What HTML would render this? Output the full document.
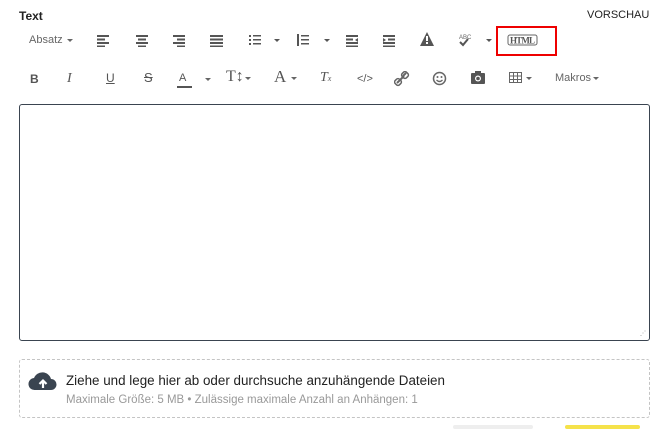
<!DOCTYPE html><html><head><meta charset="utf-8"><style>
body{margin:0;width:666px;height:428px;background:#fff;font-family:"Liberation Sans",sans-serif;position:relative;overflow:hidden;color:#333}
.a{position:absolute}
.ic{position:absolute;color:#555;font-size:13px;line-height:14px;text-align:center}
.car{position:absolute;width:0;height:0;border-left:3px solid transparent;border-right:3px solid transparent;border-top:3px solid #666}
</style></head><body>
<div class="a" style="left:19px;top:9px;font-size:12px;font-weight:bold;color:#222">Text</div>
<div class="a" style="left:587px;top:9px;font-size:11px;color:#222">VORSCHAU</div>
<div class="a" style="left:29px;top:34px;font-size:11px;color:#666">Absatz</div><div class="car" style="left:67px;top:39px"></div>
<svg class="a" style="left:0;top:0" width="666" height="100" fill="#555" stroke="none">
<g><rect x="97" y="35" width="12" height="2"/><rect x="97" y="38.5" width="8" height="2"/><rect x="97" y="42" width="12" height="2"/><rect x="97" y="45.5" width="8" height="1.5"/></g>
<g><rect x="136" y="35" width="12" height="2"/><rect x="138" y="38.5" width="8" height="2"/><rect x="136" y="42" width="12" height="2"/><rect x="138" y="45.5" width="8" height="1.5"/></g>
<g><rect x="173" y="35" width="12" height="2"/><rect x="177" y="38.5" width="8" height="2"/><rect x="173" y="42" width="12" height="2"/><rect x="177" y="45.5" width="8" height="1.5"/></g>
<g><rect x="210" y="35" width="13" height="2"/><rect x="210" y="38.5" width="13" height="2"/><rect x="210" y="42" width="13" height="2"/><rect x="210" y="45.5" width="13" height="1.5"/></g>
<g><rect x="249" y="35" width="2" height="2"/><rect x="253" y="35" width="8" height="1.5"/><rect x="249" y="39" width="2" height="2"/><rect x="253" y="39" width="8" height="1.5"/><rect x="249" y="43" width="2" height="2"/><rect x="253" y="43" width="8" height="1.5"/></g>
<polygon points="274,39 280,39 277,42"/>
<g><rect x="297" y="34" width="2" height="12"/><rect x="301" y="35" width="8" height="1.5"/><rect x="301" y="39" width="8" height="1.5"/><rect x="301" y="43" width="8" height="1.5"/></g>
<polygon points="324,39 330,39 327,42"/>
<g><rect x="346" y="35" width="12" height="2"/><rect x="346" y="38.5" width="7" height="2"/><rect x="346" y="42" width="12" height="2"/><rect x="346" y="45.5" width="12" height="1.5"/><polygon points="358,38 355,40 358,42"/></g>
<g><rect x="383" y="35" width="12" height="2"/><rect x="388" y="38.5" width="7" height="2"/><rect x="383" y="42" width="12" height="2"/><rect x="383" y="45.5" width="12" height="1.5"/><polygon points="383,38 386,40 383,42"/></g>
<polygon points="427,32 434,46 420,46"/><rect x="426" y="36" width="2" height="5" fill="#fff"/><rect x="426" y="42" width="2" height="2" fill="#fff"/>
<text x="459" y="39" font-size="6" fill="#666" font-family="Liberation Sans">ABC</text><path d="M460 42l3 3 5-6" stroke="#555" stroke-width="2" fill="none"/>
<polygon points="486,39 492,39 489,42"/>
<rect x="497" y="27" width="59" height="28" fill="none" stroke="#e00" stroke-width="2"/>
<rect x="508" y="35" width="29" height="10" rx="2" fill="none" stroke="#666" stroke-width="1"/>
<text x="510" y="43.5" font-size="9" font-family="Liberation Serif" font-weight="bold" fill="#555" textLength="25">HTML</text>
</svg>
<div class="ic" style="left:30px;top:72px;font-weight:bold;font-size:12px">B</div>
<div class="ic" style="left:67px;top:72px;font-style:italic;font-family:'Liberation Serif';font-size:14px">I</div>
<div class="ic" style="left:106px;top:71px;text-decoration:underline;font-size:12px">U</div>
<div class="ic" style="left:144px;top:71px;text-decoration:line-through;font-size:13px">S</div>
<div class="ic" style="left:179px;top:71px;font-size:11px">A</div><div class="a" style="left:177px;top:86px;width:15px;height:2px;background:#555"></div><div class="car" style="left:205px;top:78px"></div>
<div class="ic" style="left:226px;top:70px;font-family:'Liberation Serif';font-size:16px">T↕</div><div class="car" style="left:245px;top:77px"></div>
<div class="ic" style="left:274px;top:70px;font-family:'Liberation Serif';font-size:17px">A</div><div class="car" style="left:291px;top:77px"></div>
<div class="ic" style="left:320px;top:71px;font-family:'Liberation Serif';font-style:italic;font-size:14px">T<span style="font-size:8px">x</span></div>
<div class="ic" style="left:357px;top:72px;font-size:11px">&lt;/&gt;</div>
<svg class="a" style="left:394px;top:71px" width="16" height="16"><path d="M3 12l3-3M9 5l3-3M5 10l5-5" stroke="#666" stroke-width="2" fill="none"/><rect x="1" y="8" width="6" height="6" rx="2" transform="rotate(-45 4 11)" fill="none" stroke="#666" stroke-width="1.5"/><rect x="8" y="1" width="6" height="6" rx="2" transform="rotate(-45 11 4)" fill="none" stroke="#666" stroke-width="1.5"/></svg>
<svg class="a" style="left:432px;top:71px" width="16" height="16"><circle cx="7.5" cy="7.5" r="6" fill="none" stroke="#666" stroke-width="1.5"/><circle cx="5.5" cy="6" r="1" fill="#666"/><circle cx="9.5" cy="6" r="1" fill="#666"/><path d="M4.5 9q3 3 6 0" stroke="#666" stroke-width="1.3" fill="none"/></svg>
<svg class="a" style="left:470px;top:70px" width="16" height="16"><rect x="1" y="3" width="14" height="11" rx="1" fill="#555"/><rect x="5" y="1" width="6" height="3" fill="#555"/><circle cx="8" cy="8.5" r="3" fill="#fff"/><circle cx="8" cy="8.5" r="1.8" fill="#555"/></svg>
<svg class="a" style="left:509px;top:72px" width="14" height="12"><rect x="0.5" y="0.5" width="12" height="10" fill="none" stroke="#666"/><path d="M0 4h13M0 7.5h13M4.5 0v11M8.5 0v11" stroke="#666"/></svg><div class="car" style="left:526px;top:77px"></div>
<div class="a" style="left:555px;top:72px;font-size:11px;color:#666">Makros</div><div class="car" style="left:593px;top:77px"></div>
<div class="a" style="left:19px;top:104px;width:629px;height:235px;border:1px solid #3a4450;border-radius:3px"></div>
<div class="a" style="left:640px;top:330px;font-size:6px;color:#888">⋰</div>
<div class="a" style="left:19px;top:359px;width:629px;height:57px;border:1px dashed #c4c4c4;border-radius:3px"></div>
<svg class="a" style="left:28px;top:370px" width="30" height="22"><path d="M7 20a6 6 0 0 1-1-12a9 9 0 0 1 17 1a5.5 5.5 0 0 1 0 11z" fill="#3a4450"/><path d="M15 18v-7M11.5 14l3.5-3.5 3.5 3.5" stroke="#fff" stroke-width="2.2" fill="none"/></svg>
<div class="a" style="left:66px;top:373px;font-size:13.4px;color:#222;white-space:nowrap">Ziehe und lege hier ab oder durchsuche anzuhängende Dateien</div>
<div class="a" style="left:66px;top:394px;font-size:11.5px;color:#999;white-space:nowrap">Maximale Größe: 5 MB • Zulässige maximale Anzahl an Anhängen: 1</div>
<div class="a" style="left:453px;top:425px;width:80px;height:4px;background:#eee;border-radius:3px"></div>
<div class="a" style="left:565px;top:425px;width:75px;height:4px;background:#f5e24a;border-radius:3px"></div>
</body></html>
